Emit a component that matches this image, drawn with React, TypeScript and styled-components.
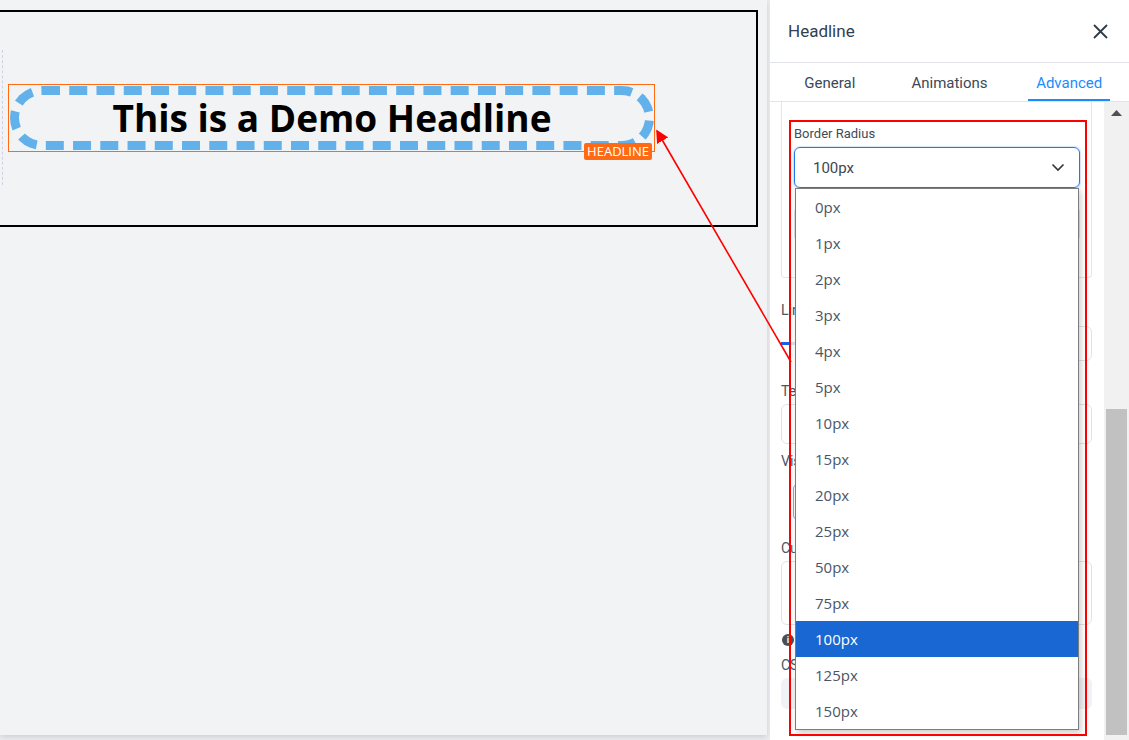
import React, { useState } from "react";
import styled, { createGlobalStyle } from "styled-components";

const GlobalStyle = createGlobalStyle`
  html, body {
    margin: 0;
    padding: 0;
    overflow: hidden;
    background: #eceef1;
    font-family: Roboto, "Liberation Sans", sans-serif;
  }
  * {
    box-sizing: border-box;
  }
`;

const Page = styled.div`
  position: relative;
  width: 1129px;
  height: 740px;
  display: flex;
  overflow: hidden;
`;

const Canvas = styled.div`
  width: 767px;
  height: 735px;
  background: #f2f3f5;
  box-shadow: 0 2px 6px rgba(0, 0, 0, 0.14);
  padding-top: 10px;
`;

const Section = styled.div`
  height: 217px;
  margin-left: -4px;
  margin-right: 9px;
  border: 2px solid #000;
  padding: 38px 0 0 4px;
`;

const Column = styled.div`
  height: 135px;
  border-left: 1px dashed #cfd0e6;
  display: flex;
  align-items: center;
`;

const Widget = styled.div`
  position: relative;
  margin-left: 5px;
  width: 647px;
  height: 68px;
  border: 1px solid #ff6a13;
  padding: 1px 0 0 1px;
`;

const Heading = styled.h2`
  margin: 0;
  height: 64px;
  border: 9px dashed #62b1ea;
  border-radius: 100px;
  display: flex;
  align-items: center;
  justify-content: center;
  font-family: "Open Sans", "Noto Sans", sans-serif;
  font-weight: 700;
  font-size: 37px;
  color: #000;
`;

const Badge = styled.span`
  position: absolute;
  right: 2px;
  bottom: -9px;
  height: 17px;
  padding: 0 3px;
  background: #ff6a13;
  border-radius: 2px;
  color: #fff;
  font-family: "Open Sans", "Noto Sans", sans-serif;
  font-size: 13px;
  line-height: 17px;
`;

const Panel = styled.aside`
  margin-left: 3px;
  width: 359px;
  height: 740px;
  background: #fff;
  display: flex;
  flex-direction: column;
`;

const PanelHeader = styled.div`
  height: 63px;
  flex: none;
  display: flex;
  align-items: center;
  justify-content: space-between;
  padding: 0 20px 0 18px;
  border-bottom: 1px solid #e1e4e8;
`;

const PanelTitle = styled.span`
  font-size: 17px;
  color: #33414f;
`;

const CloseButton = styled.button`
  border: none;
  background: none;
  padding: 0;
  width: 18px;
  height: 18px;
  display: flex;
  align-items: center;
  justify-content: center;
  cursor: pointer;
`;

const Tabs = styled.div`
  height: 39px;
  flex: none;
  display: flex;
  border-bottom: 1px solid #e1e4e8;
`;

const Tab = styled.div`
  flex: 1;
  display: flex;
  justify-content: center;
`;

const TabLabel = styled.span<{ $active?: boolean }>`
  height: 38px;
  padding: 11px 8px 0;
  font-size: 15px;
  color: ${(p) => (p.$active ? "#1a8cff" : "#3b4856")};
  border-bottom: 2px solid ${(p) => (p.$active ? "#1a8cff" : "transparent")};
  margin-bottom: -1px;
`;

const Body = styled.div`
  flex: 1;
  display: flex;
  min-height: 0;
`;

const Content = styled.div`
  position: relative;
  flex: 1;
  padding: 0 12px 0 11px;
  display: flex;
  flex-direction: column;
`;

const Card = styled.div`
  border: 1px solid #e3e6ea;
  border-top: none;
  border-radius: 0 0 4px 4px;
  padding: 24px 11px 35px 12px;
  display: flex;
  flex-direction: column;
  gap: 18px;
`;

const Field = styled.div`
  display: flex;
  flex-direction: column;
  gap: 6px;
`;

const Label = styled.span`
  font-size: 13px;
  color: #3f4b58;
`;

const FieldLabel = styled.span`
  display: block;
  white-space: nowrap;
  font-size: 14px;
  line-height: 16px;
  color: #4a5561;
`;

const SelectWrap = styled.div`
  position: relative;
`;

const Select = styled.div`
  height: 41px;
  border: 1.5px solid #1f78f0;
  border-radius: 6px;
  display: flex;
  align-items: center;
  justify-content: space-between;
  padding: 0 14px 0 18px;
  font-size: 15px;
  color: #3b4652;
  box-shadow: 0 0 0 1px rgba(31, 120, 240, 0.15), 0 3px 6px rgba(0, 0, 0, 0.1);
`;

const Input = styled.div<{ $h?: number }>`
  height: ${(p) => p.$h ?? 40}px;
  border: 1px solid #dfe3e8;
  border-radius: 6px;
  background: #fff;
`;

const Group = styled.div<{ $mt: number; $gap: number }>`
  margin-top: ${(p) => p.$mt}px;
  display: flex;
  flex-direction: column;
  gap: ${(p) => p.$gap}px;
`;

const SliderRow = styled.div`
  display: flex;
  align-items: center;
  gap: 10px;
`;

const Slider = styled.div`
  flex: 1;
  height: 3px;
  background: #dfe3e8;
`;

const SliderFill = styled.div`
  height: 3px;
  background: #1a5ee8;
`;

const Toggle = styled.div`
  margin-left: 12px;
  width: 120px;
  height: 38px;
  border: 1px solid #7ba7e8;
  border-radius: 6px;
`;

const InfoRow = styled.div`
  margin-top: 7px;
  padding-left: 1px;
  display: flex;
  align-items: center;
  gap: 6px;
`;

const InfoDot = styled.span`
  width: 12px;
  height: 12px;
  border-radius: 50%;
  background: #4a4f55;
  color: #fff;
  font-size: 9px;
  font-weight: 700;
  line-height: 12px;
  text-align: center;
`;

const GreyBox = styled.div`
  height: 31px;
  border-radius: 6px;
  background: #f0f2f5;
`;

const Dropdown = styled.ul`
  position: absolute;
  top: 100%;
  left: 1px;
  right: 1px;
  margin: 0;
  padding: 0;
  list-style: none;
  background: #fff;
  border: 1px solid #7d7d7d;
  box-shadow: 2px 3px 6px rgba(0, 0, 0, 0.2);
  z-index: 5;
`;

const Option = styled.li<{ $selected?: boolean }>`
  height: 36px;
  display: flex;
  align-items: center;
  padding-left: 19px;
  font-family: "Open Sans", "Noto Sans", sans-serif;
  font-size: 15px;
  color: ${(p) => (p.$selected ? "#fff" : "#4a5666")};
  background: ${(p) => (p.$selected ? "#1967d2" : "#fff")};
`;

const Scrollbar = styled.div`
  width: 25px;
  flex: none;
  background: #f1f1f1;
  display: flex;
  flex-direction: column;
  align-items: center;
  padding: 2px 2px 5px;
`;

const ScrollArrow = styled.div`
  height: 18px;
  display: flex;
  align-items: center;
  justify-content: center;
`;

const Thumb = styled.div`
  margin-top: 287px;
  width: 21px;
  flex: 1;
  background: #c1c1c1;
`;

const Highlight = styled.div`
  position: absolute;
  left: 789px;
  top: 120px;
  width: 298px;
  height: 616px;
  border: 2px solid #ff0000;
  pointer-events: none;
  z-index: 10;
`;

const ArrowLayer = styled.svg`
  position: absolute;
  left: 0;
  top: 0;
  pointer-events: none;
  z-index: 11;
`;

const options = [
  "0px", "1px", "2px", "3px", "4px", "5px", "10px", "15px",
  "20px", "25px", "50px", "75px", "100px", "125px", "150px",
];

export default function App() {
  const [value, setValue] = useState("100px");

  return (
    <>
      <GlobalStyle />
      <Page>
        <Canvas>
          <Section>
            <Column>
              <Widget>
                <Heading>This is a Demo Headline</Heading>
                <Badge>HEADLINE</Badge>
              </Widget>
            </Column>
          </Section>
        </Canvas>

        <Panel>
          <PanelHeader>
            <PanelTitle>Headline</PanelTitle>
            <CloseButton aria-label="Close">
              <svg width="15" height="15" viewBox="0 0 15 15">
                <path d="M1 1L14 14M14 1L1 14" stroke="#2f3b47" strokeWidth="1.8" />
              </svg>
            </CloseButton>
          </PanelHeader>
          <Tabs>
            <Tab><TabLabel>General</TabLabel></Tab>
            <Tab><TabLabel>Animations</TabLabel></Tab>
            <Tab><TabLabel $active>Advanced</TabLabel></Tab>
          </Tabs>
          <Body>
            <Content>
              <Card>
                <Field>
                  <Label>Border Radius</Label>
                  <SelectWrap>
                    <Select>
                      <span>{value}</span>
                      <svg width="14" height="9" viewBox="0 0 14 9">
                        <path d="M1.5 1.5L7 7L12.5 1.5" fill="none" stroke="#333" strokeWidth="1.6" />
                      </svg>
                    </Select>
                    <Dropdown>
                      {options.map((o) => (
                        <Option key={o} $selected={o === value} onClick={() => setValue(o)}>
                          {o}
                        </Option>
                      ))}
                    </Dropdown>
                  </SelectWrap>
                </Field>
                <Input $h={36} />
              </Card>
              <Group $mt={24} $gap={8}>
                <FieldLabel>Line Height</FieldLabel>
                <SliderRow>
                  <Slider><SliderFill style={{ width: "4%" }} /></Slider>
                  <Input $h={35} style={{ width: 90 }} />
                </SliderRow>
              </Group>
              <Group $mt={22} $gap={5}>
                <FieldLabel>Text Shadow</FieldLabel>
                <Input />
              </Group>
              <Group $mt={9} $gap={14}>
                <FieldLabel>Visibility</FieldLabel>
                <Toggle />
              </Group>
              <Group $mt={19} $gap={5}>
                <FieldLabel>Custom Attributes</FieldLabel>
                <Input $h={64} />
              </Group>
              <InfoRow>
                <InfoDot>i</InfoDot>
                <FieldLabel>Visible on all devices</FieldLabel>
              </InfoRow>
              <Group $mt={9} $gap={5}>
                <FieldLabel>CSS Classes</FieldLabel>
                <GreyBox />
              </Group>
            </Content>
            <Scrollbar>
              <ScrollArrow>
                <svg width="11" height="6" viewBox="0 0 11 6">
                  <path d="M0 6L5.5 0L11 6Z" fill="#505050" />
                </svg>
              </ScrollArrow>
              <Thumb />
            </Scrollbar>
          </Body>
        </Panel>

        <Highlight />
        <ArrowLayer width="1129" height="740" viewBox="0 0 1129 740">
          <defs>
            <marker id="head" markerWidth="8" markerHeight="8" refX="7" refY="4" orient="auto">
              <path d="M0 0L8 4L0 8Z" fill="#ff0000" />
            </marker>
          </defs>
          <line x1="791" y1="362" x2="657" y2="131" stroke="#ff0000" strokeWidth="1.6" markerEnd="url(#head)" />
        </ArrowLayer>
      </Page>
    </>
  );
}
